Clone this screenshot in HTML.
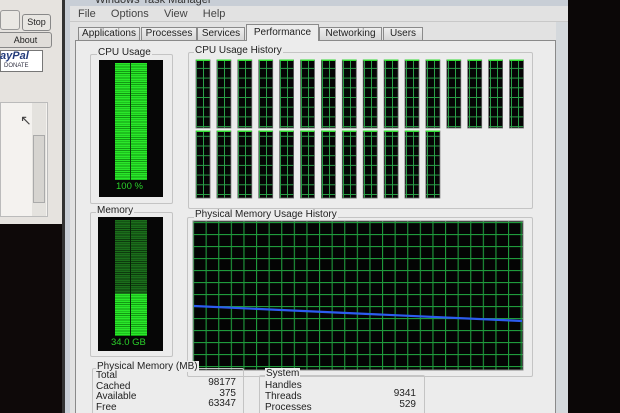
<!DOCTYPE html>
<html style="overflow:hidden;width:620px;height:413px"><head><meta charset="utf-8"><style>
*{margin:0;padding:0;box-sizing:border-box}
body{width:620px;height:413px;overflow:hidden;background:#0c0808;font-family:"Liberation Sans",sans-serif;font-size:10px;color:#222;position:relative}
.a{position:absolute}
.t{position:absolute;white-space:nowrap}
.tab{position:absolute;top:27px;height:14px;border:1px solid #8a8a8a;border-bottom:none;background:linear-gradient(#eee,#d4d4d4);font-size:10px;line-height:12px;text-align:center;color:#222}
.grp{position:absolute;border:1px solid #c4c4c4;border-radius:2px}
.gb{background:repeating-linear-gradient(#2ae82a 0 1.4px,#129a12 1.4px 2.2px)}
.gd{background:repeating-linear-gradient(#1b6e1b 0 1.4px,#0d3a0d 1.4px 2.2px)}
</style></head><body>
<div class="a" style="left:0;top:0;width:63px;height:224px;background:#e6e3df"></div>
<div class="a" style="left:0;top:10px;width:20px;height:20px;border:1px solid #999;border-radius:3px;background:#eae8e4"></div>
<div class="a" style="left:22px;top:14px;width:29px;height:17px;border:1px solid #888;border-radius:3px;background:#e8e6e2;font-size:9px;line-height:15px;text-align:center">Stop</div>
<div class="a" style="left:-5px;top:32px;width:57px;height:16px;border:1px solid #888;border-radius:3px;background:#e0ddd9;font-size:9px;line-height:14px;text-align:center;padding-left:4px">About</div>
<div class="a" style="left:0;top:50px;width:43px;height:22px;border:1px solid #777;background:#fff"></div>
<div class="t" style="left:0;top:50px;font:italic bold 11px 'Liberation Sans';color:#223a7a">ayPal</div>
<div class="t" style="left:4px;top:63px;font-size:6px;color:#334">DONATE</div>
<div class="a" style="left:0;top:102px;width:48px;height:115px;background:#f4f2ef;border:1px solid #bbb"></div>
<div class="a" style="left:32px;top:103px;width:14px;height:113px;background:#e4e2de"></div>
<div class="a" style="left:33px;top:135px;width:12px;height:68px;background:#d6d4d0;border:1px solid #aaa"></div>
<div class="t" style="left:20px;top:112px;font-size:14px;color:#444">↖</div>
<div class="a" style="left:0;top:224px;width:63px;height:189px;background:#0e0909"></div>
<div class="a" style="left:62px;top:0;width:507px;height:413px;background:#c8ced6"></div>
<div class="a" style="left:62px;top:0;width:3px;height:413px;background:#333"></div>
<div class="t" style="left:95px;top:-6px;font-size:11px;color:#333">Windows Task Manager</div>
<div class="a" style="left:70px;top:6px;width:499px;height:407px;background:#e2e2e2"></div>
<div class="t" style="left:78px;top:8px;font-size:11px;color:#444;word-spacing:2px">File&nbsp;&nbsp; Options&nbsp;&nbsp; View&nbsp;&nbsp; Help</div>
<div class="a" style="left:70px;top:21px;width:499px;height:1px;background:#c8c8c8"></div>
<div class="tab" style="left:78px;width:62px">Applications</div>
<div class="tab" style="left:141px;width:56px">Processes</div>
<div class="tab" style="left:197px;width:48px">Services</div>
<div class="tab" style="left:319px;width:63px">Networking</div>
<div class="tab" style="left:383px;width:40px">Users</div>
<div class="a" style="left:75px;top:40px;width:481px;height:373px;border:1px solid #8a8a8a;border-bottom:none;background:#ececec"></div>
<div class="tab" style="left:246px;top:24px;width:73px;height:17px;background:#ececec;line-height:15px;border-color:#8a8a8a;z-index:2">Performance</div>
<div class="a" style="left:556px;top:22px;width:13px;height:391px;background:#d4d8dc"></div>
<div class="a" style="left:568px;top:0;width:52px;height:413px;background:#0b0707"></div>
<div class="grp" style="left:90px;top:54px;width:83px;height:150px"></div>
<div class="t" style="left:97px;top:47px;background:#ececec;padding:0 1px">CPU Usage</div>
<div class="a" style="left:99px;top:60px;width:64px;height:137px;background:#060606"></div>
<div class="a gb" style="left:115px;top:63px;width:32px;height:117px"></div>
<div class="a" style="left:130px;top:63px;width:1px;height:117px;background:#0a3a0a"></div>
<div class="t" style="left:116px;top:181px;color:#2ad02a;font-size:9.5px">100 %</div>
<div class="grp" style="left:188px;top:52px;width:345px;height:157px"></div>
<div class="t" style="left:194px;top:45px;background:#ececec;padding:0 1px">CPU Usage History</div>
<svg class="a" style="left:0;top:0" width="620" height="413">
<defs>
<pattern id="cg" width="7" height="9.7" patternUnits="userSpaceOnUse"><rect width="7" height="9.7" fill="#050505"/><path d="M0.5 0V9.7M0 0.5H7" stroke="#2aa048" stroke-width="1"/></pattern>
<pattern id="mg" width="12.6" height="12" patternUnits="userSpaceOnUse" x="193" y="222"><rect width="12.6" height="12" fill="#040404"/><path d="M0.5 0V12M0 0.5H12.6" stroke="#1f9a3c" stroke-width="1.2"/></pattern>
</defs>
<g id="bars"></g>
<rect x="193" y="221" width="330" height="149" fill="url(#mg)"/>
<rect x="193" y="221" width="330" height="149" fill="none" stroke="#888" stroke-width="1"/>
<path d="M194 306 L522 321" stroke="#2c5cf0" stroke-width="2.2" fill="none"/>
</svg>
<div class="grp" style="left:90px;top:212px;width:83px;height:145px"></div>
<div class="t" style="left:96px;top:205px;background:#ececec;padding:0 1px">Memory</div>
<div class="a" style="left:98px;top:217px;width:65px;height:134px;background:#060606"></div>
<div class="a gd" style="left:115px;top:220px;width:32px;height:74px"></div>
<div class="a gb" style="left:115px;top:294px;width:32px;height:42px"></div>
<div class="a" style="left:130px;top:220px;width:1px;height:116px;background:#062006"></div>
<div class="t" style="left:111px;top:337px;color:#2ad02a;font-size:9.5px">34.0 GB</div>
<div class="grp" style="left:187px;top:217px;width:346px;height:160px"></div>
<div class="t" style="left:194px;top:209px;background:#ececec;padding:0 1px">Physical Memory Usage History</div>
<div class="grp" style="left:92px;top:368px;width:152px;height:50px"></div>
<div class="t" style="left:96px;top:361px;background:#ececec;padding:0 1px">Physical Memory (MB)</div>
<div class="t" style="left:96px;top:371px;line-height:10.5px">Total<br>Cached<br>Available<br>Free</div>
<div class="t" style="left:200px;top:378px;line-height:10.5px;text-align:right;width:36px">98177<br>375<br>63347</div>
<div class="grp" style="left:259px;top:375px;width:166px;height:45px"></div>
<div class="t" style="left:265px;top:368px;background:#ececec;padding:0 1px">System</div>
<div class="t" style="left:265px;top:380px;line-height:11px">Handles<br>Threads<br>Processes</div>
<div class="t" style="left:380px;top:388px;line-height:11px;text-align:right;width:36px">9341<br>529</div>
<script>
var g=document.getElementById('bars'),s='';
for(var i=0;i<16;i++){var x=196+i*20.9;
s+='<rect x="'+x+'" y="60" width="14" height="68" fill="url(#cg)" stroke="#666" stroke-width="0.8"/><rect x="'+x+'" y="59.5" width="14" height="1.5" fill="#33dd33"/>';
if(i<12)s+='<rect x="'+x+'" y="131" width="14" height="67" fill="url(#cg)" stroke="#666" stroke-width="0.8"/><rect x="'+x+'" y="130.5" width="14" height="1.5" fill="#33dd33"/>';}
g.innerHTML=s;
</script>
</body></html>
